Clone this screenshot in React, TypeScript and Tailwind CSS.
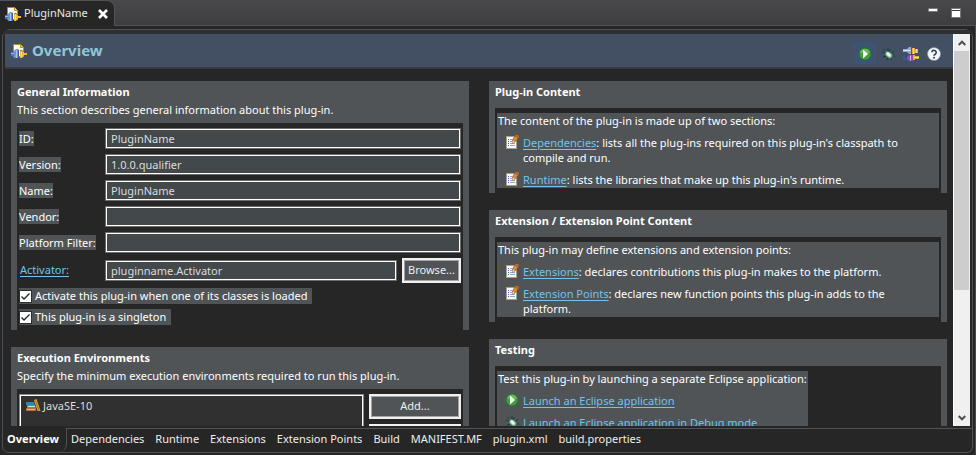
import type { ReactNode } from "react";

function PluginIcon() {
  return (
    <svg width="16" height="16" viewBox="0 0 16 16" aria-hidden="true" className="shrink-0">
      <path d="M2.500 1.500h7l3 3v9h-10z" fill="#fbf8ee" stroke="#b98a1c" />
      <path d="M9.500 1.500v3h3" fill="#f3d98b" stroke="#b98a1c" />
      <path d="M0 9h4v4H0z" fill="#4c74c0" />
      <path d="M0 10.500h4" stroke="#9db8ea" />
      <path d="M3 15V8l2-2h2.500v9z" fill="#6f93d8" />
      <path d="M5.500 7v8" stroke="#a9c0ee" />
      <path d="M7.500 7v8" stroke="#34579f" />
      <path d="M9 7h2l2 2v1h3v2h-3v1l-2 2H9z" fill="#f2b93a" />
      <path d="M9.500 7.500H11l1.500 1.500" stroke="#a66d0c" fill="none" />
      <path d="M10.500 8.500v5" stroke="#fde59a" />
    </svg>
  );
}

function RunIcon() {
  return (
    <svg width="16" height="16" viewBox="0 0 16 16" aria-hidden="true" className="shrink-0">
      <circle cx="8" cy="8" r="6" fill="#3f9f3c" stroke="#24782a" strokeWidth="1" />
      <path d="M3 6.500a5.200 5.200 0 0 1 10 0q-5 2-10 0z" fill="#86c96a" opacity=".6" />
      <path d="M6 3.500v9l5-4.500z" fill="#fff" />
    </svg>
  );
}

function BugIcon() {
  return (
    <svg width="16" height="16" viewBox="0 0 16 16" aria-hidden="true" className="shrink-0">
      <path
        d="M8 2v3M4 3l2 3M2 6l4 1M3 11l4-1M7 14l1-3M11 14v-3M12 7l2-2M13 10h2M9 5l2-2"
        stroke="#173d3a"
        fill="none"
      />
      <ellipse cx="8.700" cy="8.700" rx="4" ry="2.700" transform="rotate(42 8.700 8.700)" fill="#a9d3b0" stroke="#1f5750" strokeWidth=".6" />
      <ellipse cx="8.600" cy="8.400" rx="2.300" ry="1.200" transform="rotate(42 8.600 8.400)" fill="#eef8e8" />
      <circle cx="5.600" cy="5.800" r="1.100" fill="#3b7c5c" />
    </svg>
  );
}

function ExportIcon() {
  return (
    <svg width="16" height="16" viewBox="0 0 16 16" aria-hidden="true">
      <path d="M0 3h4l2-2h2v7H6L4 6H0z" fill="#8ea9dc" />
      <path d="M0 4.500h8" stroke="#d8e3f8" />
      <path d="M8 1.500h1v6H8z" fill="#3c5a98" />
      <path d="M9 2h3v1h3v4h-3v1H9z" fill="#e8ab35" />
      <path d="M10.500 2v6M13.500 3v4" stroke="#fce09a" />
      <path d="M0 10l3 4M0 13.500h4" stroke="#315aa8" strokeWidth="1.500" />
      <path d="M4 11l2-2h4v6H6l-2-2z" fill="#8d4fb0" />
      <path d="M7.500 9.500v5" stroke="#e0b5ef" />
      <path d="M10 9h2v1h4v3h-4v1h-2z" fill="#e8ab35" />
      <path d="M11 11.500h5" stroke="#fce09a" />
    </svg>
  );
}

function HelpIcon() {
  return (
    <svg width="16" height="16" viewBox="0 0 16 16" aria-hidden="true">
      <circle cx="8" cy="8" r="6.300" fill="#f5f7fa" stroke="#c3ccd8" strokeWidth=".6" />
      <path d="M5.800 6.300a2.200 2.100 0 1 1 3.400 1.900q-1.200.7-1.200 1.600" fill="none" stroke="#2b4060" strokeWidth="1.600" />
      <circle cx="8" cy="11.700" r="1" fill="#2b4060" />
    </svg>
  );
}

function PageIcon() {
  return (
    <svg width="16" height="16" viewBox="0 0 16 16" aria-hidden="true" className="shrink-0">
      <path d="M2 2h11v13H2z" fill="#a79f83" />
      <path d="M3 3h9v11H3z" fill="#f6f8fc" />
      <path d="M4 5.500h1M4 7.500h1M4 9.500h1M4 11.500h1" stroke="#3c62a8" />
      <path d="M6 5.500h2M6 7.500h3M6 9.500h5M6 11.500h5" stroke="#8fa8d4" />
      <path d="M8.500 6L11.500 1h3v2.500L11 8l-2.500 1.200z" fill="#d98c45" stroke="#8c4f1d" strokeWidth=".7" />
      <path d="M11.500 1h3v2.500l-1 1-2.800-2z" fill="#b3672a" />
      <path d="M8.500 6.500l2.300 1.500-2.300 1.200z" fill="#f4e3c4" />
    </svg>
  );
}

function LibraryIcon() {
  return (
    <svg width="16" height="16" viewBox="0 0 16 16" aria-hidden="true" className="shrink-0">
      <path d="M1 4h8l1 3H1z" fill="#2f86b5" />
      <path d="M2 7h8l1 3H2z" fill="#3f9e78" />
      <path d="M3 8.500h7" stroke="#c4e6d4" />
      <path d="M1 10h10v3H1z" fill="#c8653a" />
      <path d="M2 11.500h8" stroke="#eab08a" />
      <path d="M9 2l2.500-1L15.500 13h-3z" fill="#e8a22c" />
      <path d="M10.500 2.500l3.500 10" stroke="#b06f12" />
    </svg>
  );
}

function Section({ title, note, children }: { title: string; note?: string; children: ReactNode }) {
  return (
    <section className="border-x-6 border-[#505457] bg-[#262626]">
      <header className={`bg-[#505457] text-white ${note ? "h-[42px]" : "h-[27px]"}`}>
        <h2 className="pt-[3px] leading-4 font-bold">{title}</h2>
        {note && <p className="pt-[2px] leading-4">{note}</p>}
      </header>
      {children}
    </section>
  );
}

const fieldClass =
  "h-[21px] w-full min-w-0 border border-[#6c6c6c] bg-[#43484b] px-[5px] text-[#dcdcdc] outline-1 -outline-offset-2 outline-white";
const buttonClass =
  "h-[25px] shrink-0 border-2 border-[#f0f0f0] bg-[#505457] text-[#eeeeee] outline-1 -outline-offset-3 outline-[#a5a5a5]";
const linkClass = "text-[#6fc5ee] underline underline-offset-2";

const fields = [
  { id: "plugin-id", label: "ID:", value: "PluginName" },
  { id: "plugin-version", label: "Version:", value: "1.0.0.qualifier" },
  { id: "plugin-name", label: "Name:", value: "PluginName" },
  { id: "plugin-vendor", label: "Vendor:", value: "" },
  { id: "plugin-filter", label: "Platform Filter:", value: "" },
];

function CheckRow({ children }: { children: ReactNode }) {
  return (
    <label className="flex h-4 w-fit items-center gap-1 bg-[#505457] pr-[5px] pl-px text-white">
      <span className="relative flex">
        <input
          type="checkbox"
          defaultChecked
          className="peer size-[11px] appearance-none bg-white outline-1 outline-[#2e2e2e]"
        />
        <svg
          viewBox="0 0 11 11"
          aria-hidden="true"
          className="pointer-events-none absolute inset-0 hidden size-[11px] peer-checked:block"
        >
          <path d="M1.500 5.500l2.500 2.500 5.500-5.500" fill="none" stroke="#222" strokeWidth="1.300" />
        </svg>
      </span>
      {children}
    </label>
  );
}

function Item({ icon, children }: { icon: ReactNode; children: ReactNode }) {
  return (
    <li className="flex gap-[2px] pl-[6px]">
      <span className="-mt-px h-[15px] w-[17px]">{icon}</span>
      <p className="flex-1 pr-4">{children}</p>
    </li>
  );
}

function LinkBlock({ intro, fit, children }: { intro: string; fit?: boolean; children: ReactNode }) {
  return (
    <div className="px-[2px] py-[5px]">
      <div className={`bg-[#505457] px-px pb-px leading-[15px] text-white ${fit ? "w-fit" : ""}`}>
        <p>{intro}</p>
        <ul className="mt-[7px] flex flex-col gap-[7px]">{children}</ul>
      </div>
    </div>
  );
}

const pages = [
  "Dependencies",
  "Runtime",
  "Extensions",
  "Extension Points",
  "Build",
  "MANIFEST.MF",
  "plugin.xml",
  "build.properties",
];

export default function App() {
  return (
    <div className="flex h-screen flex-col overflow-hidden bg-[#262626] font-['Noto_Sans','Open_Sans',sans-serif] text-[11px]">
      <div className="flex h-[26px] shrink-0 items-stretch bg-linear-to-b from-[#49494c] to-[#3d3d3f]">
        <button className="flex w-[115px] shrink-0 items-center gap-[3px] rounded-tr-lg border-t border-r border-[#515356] bg-[#262626] pl-[5px] text-[#e8e8e8]">
          <PluginIcon />
          <span className="flex-1 text-left">PluginName</span>
          <svg width="12" height="12" viewBox="0 0 12 12" aria-hidden="true" className="mr-[5px]">
            <path d="M2 2l8 8M10 2l-8 8" stroke="#fff" strokeWidth="2.600" />
          </svg>
        </button>
        <div className="flex flex-1 items-start justify-end gap-[13px] border-b border-[#515356] pt-2 pr-[15px]">
          <button aria-label="Minimize" className="h-1 w-[10px] border border-[#77797c] bg-white" />
          <button aria-label="Maximize" className="h-[10px] w-[10px] border border-[#77797c] bg-white pb-[5px]">
            <span className="block h-px bg-[#3d3d3f]" />
          </button>
        </div>
      </div>

      <div className="flex min-h-0 flex-1 flex-col border-r border-[#4a4a4c] px-[2px] pt-[3px] pb-[2px]">
        <div className="flex min-h-0 flex-1 flex-col rounded-t-lg rounded-b-md border border-[#4d4f52]">
          <div className="h-1 shrink-0 rounded-t-lg bg-[#2f3032]" />
          <div className="flex min-h-0 flex-1 px-[2px]">
            <main className="min-w-0 flex-1 overflow-hidden">
              <div className="flex h-[35px] items-center border-b-2 border-[#363a3e] bg-[#435063] pr-[11px] pl-[6px]">
                <PluginIcon />
                <h1 className="flex-1 pl-[5px] text-[15px] font-bold text-[#8fc7d8]">Overview</h1>
                <div className="flex items-center pt-[6px]">
                  <button
                    aria-label="Launch an Eclipse application"
                    className="mr-[4px] flex h-[21px] w-[23px] items-center justify-center border border-[#2f5a86] bg-[#3d5370]"
                  >
                    <RunIcon />
                  </button>
                  <button aria-label="Debug" className="mr-[7px]">
                    <BugIcon />
                  </button>
                  <button aria-label="Export" className="mr-[7px]">
                    <ExportIcon />
                  </button>
                  <button aria-label="Help">
                    <HelpIcon />
                  </button>
                </div>
              </div>

              <div className="grid grid-cols-2 items-start gap-5 px-[6px] pt-3">
                <div className="flex flex-col gap-[17px]">
                  <Section
                    title="General Information"
                    note="This section describes general information about this plug-in."
                  >
                    <div className="px-[2px] py-[5px]">
                      <div className="grid grid-cols-[78px_minmax(0,1fr)] items-center gap-x-2 gap-y-[5px]">
                        {fields.map((f) => (
                          <div key={f.id} className="contents">
                            <label htmlFor={f.id} className="w-fit bg-[#505457] leading-[15px] whitespace-nowrap text-white">
                              {f.label}
                            </label>
                            <input id={f.id} defaultValue={f.value} className={fieldClass} />
                          </div>
                        ))}
                        <a href="#activator" id="activator-label" className={`pl-px ${linkClass}`}>
                          Activator:
                        </a>
                        <div className="flex items-center gap-[5px]">
                          <input
                            aria-labelledby="activator-label"
                            defaultValue="pluginname.Activator"
                            className={fieldClass}
                          />
                          <button className={`w-[59px] ${buttonClass}`}>Browse...</button>
                        </div>
                      </div>
                      <div className="mt-[5px] flex flex-col gap-[5px]">
                        <CheckRow>Activate this plug-in when one of its classes is loaded</CheckRow>
                        <CheckRow>This plug-in is a singleton</CheckRow>
                      </div>
                    </div>
                  </Section>

                  <Section
                    title="Execution Environments"
                    note="Specify the minimum execution environments required to run this plug-in."
                  >
                    <div className="flex gap-[5px] px-[2px] py-[5px]">
                      <ul className="h-24 flex-1 border border-[#8a8a8a] bg-[#303030] px-[5px] py-[3px] text-[#dcdcdc] outline-1 -outline-offset-2 outline-white">
                        <li className="flex items-center gap-[2px]">
                          <LibraryIcon />
                          JavaSE-10
                        </li>
                      </ul>
                      <div className="flex flex-col gap-[5px]">
                        <button className={`w-[92px] ${buttonClass}`}>Add...</button>
                        <button aria-label="Remove" className={`w-[92px] ${buttonClass}`} />
                      </div>
                    </div>
                  </Section>
                </div>

                <div className="flex flex-col gap-[17px]">
                  <Section title="Plug-in Content">
                    <LinkBlock intro="The content of the plug-in is made up of two sections:">
                      <Item icon={<PageIcon />}>
                        <a href="#dependencies" className={linkClass}>Dependencies</a>: lists all the plug-ins required on this
                        plug-in's classpath to compile and run.
                      </Item>
                      <Item icon={<PageIcon />}>
                        <a href="#runtime" className={linkClass}>Runtime</a>: lists the libraries that make up this plug-in's
                        runtime.
                      </Item>
                    </LinkBlock>
                  </Section>

                  <Section title="Extension / Extension Point Content">
                    <LinkBlock intro="This plug-in may define extensions and extension points:">
                      <Item icon={<PageIcon />}>
                        <a href="#extensions" className={linkClass}>Extensions</a>: declares contributions this plug-in makes to
                        the platform.
                      </Item>
                      <Item icon={<PageIcon />}>
                        <a href="#extension-points" className={linkClass}>Extension Points</a>: declares new function points this
                        plug-in adds to the platform.
                      </Item>
                    </LinkBlock>
                  </Section>

                  <Section title="Testing">
                    <LinkBlock fit intro="Test this plug-in by launching a separate Eclipse application:">
                      <Item icon={<RunIcon />}>
                        <a href="#launch" className={linkClass}>Launch an Eclipse application</a>
                      </Item>
                      <Item icon={<BugIcon />}>
                        <a href="#debug" className={linkClass}>Launch an Eclipse application in Debug mode</a>
                      </Item>
                    </LinkBlock>
                  </Section>
                </div>
              </div>
            </main>

            <div className="flex w-[17px] shrink-0 flex-col border-l border-white bg-[#f0f0f0]">
              <button aria-label="Scroll up" className="flex h-[17px] items-center justify-center">
                <svg width="8" height="6" viewBox="0 0 8 6" aria-hidden="true">
                  <path d="M.7 5L4 1.700 7.300 5" fill="none" stroke="#505050" strokeWidth="2" />
                </svg>
              </button>
              <div className="flex-1">
                <div className="mr-px h-2/3 bg-[#cdcdcd]" />
              </div>
              <button aria-label="Scroll down" className="flex h-[17px] items-center justify-center">
                <svg width="8" height="6" viewBox="0 0 8 6" aria-hidden="true">
                  <path d="M.7 1L4 4.300 7.300 1" fill="none" stroke="#505050" strokeWidth="2" />
                </svg>
              </button>
            </div>
          </div>

          <nav className="flex h-[26px] shrink-0 items-stretch pt-[2px] text-[#eeeeee]">
            <button className="w-16 shrink-0 rounded-br-lg border-r border-[#505254] pr-[3px] pb-[2px] font-bold text-white">
              Overview
            </button>
            <div className="flex flex-1 items-center gap-[11px] border-t border-[#505254] pb-[3px] pl-1">
              {pages.map((p) => (
                <button key={p}>{p}</button>
              ))}
            </div>
          </nav>
        </div>
      </div>
    </div>
  );
}
